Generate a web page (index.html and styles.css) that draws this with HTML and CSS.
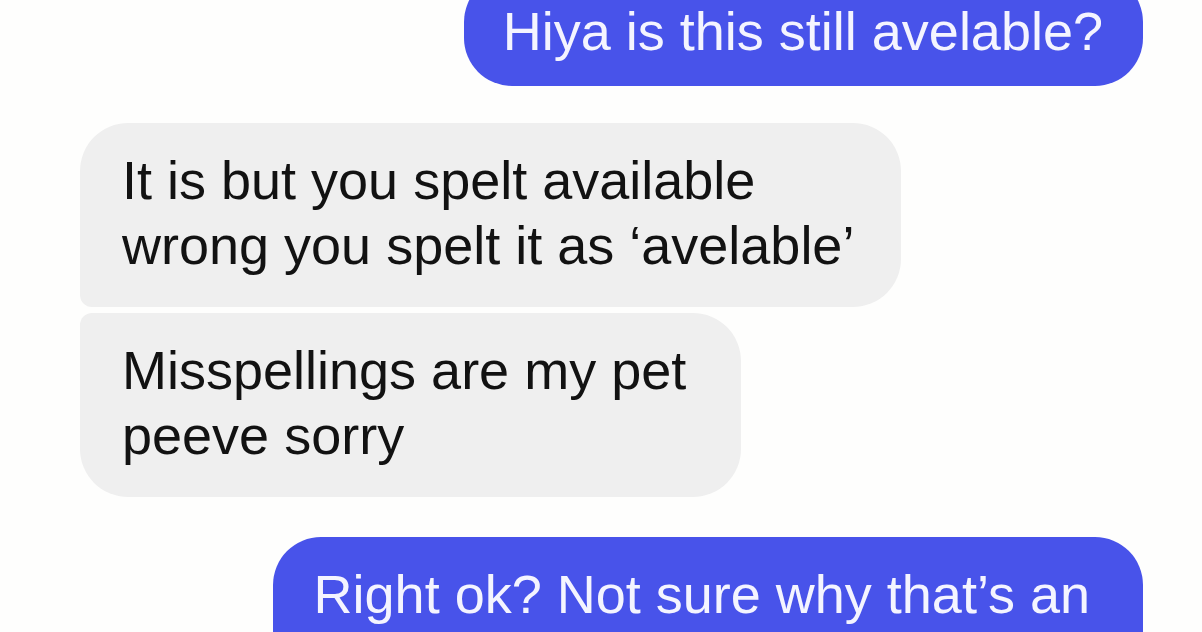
FILE: index.html
```html
<!DOCTYPE html>
<html lang="en">
<head>
<meta charset="utf-8">
<title>Chat</title>
<link rel="stylesheet" href="styles.css">
</head>
<body>
<main class="thread">
  <div class="bubble sent top">Hiya is this still avelable?</div>
  <div class="group">
    <div class="bubble received first">It is but you spelt available<br>wrong you spelt it as ‘avelable’</div>
    <div class="bubble received last">Misspellings are my pet<br>peeve sorry</div>
  </div>
  <div class="bubble sent wide">Right ok? Not sure why that’s an</div>
</main>
</body>
</html>
```

FILE: styles.css
```css
html, body {
  margin: 0;
  padding: 0;
  background: #fefefd;
  height: 100%;
  overflow: hidden;
}

.thread {
  display: flex;
  flex-direction: column;
  gap: 37px;
  margin-top: -26px;
  padding: 0 59px 0 80px;
  font-family: "Liberation Sans", Arial, sans-serif;
  font-size: 54px;
  line-height: 65px;
}

.group {
  display: flex;
  flex-direction: column;
  align-items: flex-start;
  gap: 6px;
}

.bubble {
  padding: 25px 43px 29px 42px;
  border-radius: 48px;
  white-space: nowrap;
}

.sent {
  align-self: flex-end;
  background: #4853ea;
  color: #f4f4ff;
}

.sent.top {
  padding: 25px 40px 22px 39px;
}

.received {
  background: #efefef;
  color: #121212;
}

.received.first {
  padding-right: 47px;
  border-bottom-left-radius: 12px;
}

.received.last {
  padding-right: 55px;
  border-top-left-radius: 12px;
}

.wide {
  margin-top: 3px;
  padding-right: 53px;
  padding-left: 41px;
  padding-bottom: 60px;
}
```
